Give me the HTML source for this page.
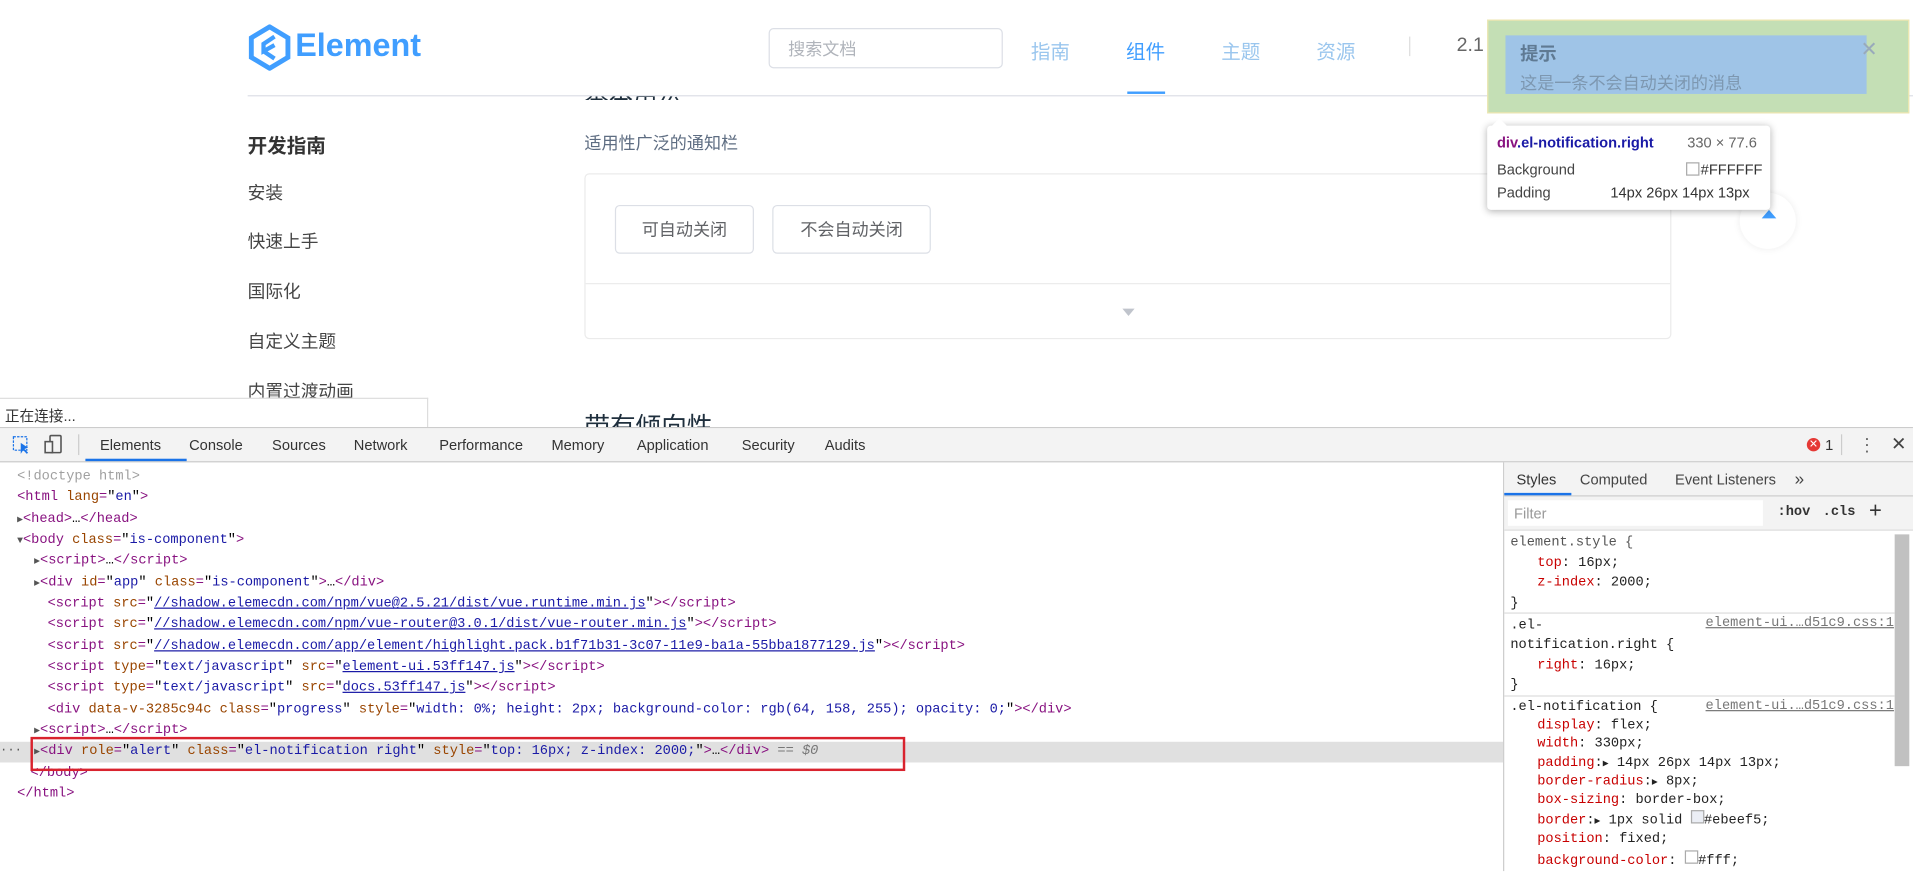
<!DOCTYPE html>
<html><head><meta charset="utf-8">
<style>
html,body{margin:0;padding:0;width:1913px;height:871px;overflow:hidden;background:#fff}
#w{position:absolute;left:0;top:0;width:1568px;height:714px;transform:scale(1.22);transform-origin:0 0;font-family:"Liberation Sans","Noto Sans CJK SC",sans-serif;}
.a{position:absolute;white-space:nowrap}
.m{font-family:"Liberation Mono","DejaVu Sans Mono",monospace;font-size:11.2px;}
.tg{color:#881280}.an{color:#994500}.av{color:#1a1aa6}.lk{color:#1a1aa6;text-decoration:underline}.gr{color:#a0a0a0}
.pn{color:#c80000}
.tab{position:absolute;top:358px;font-size:12px;color:#333}
</style></head><body><div id="w">
<!-- header -->
<svg class="a" style="left:203px;top:20px" width="36" height="38" viewBox="0 0 36 38"><path d="M18 2 L33 11 L33 27 L18 36 L3 27 L3 11 Z" fill="none" stroke="#409eff" stroke-width="4"/><path d="M22 10 L13 16 L13 22 L22 17 M13 22 L22 28" fill="none" stroke="#409eff" stroke-width="3.5"/></svg>
<div class="a" style="left:242px;top:22px;font-size:26.5px;font-weight:bold;color:#409eff">Element</div>
<div class="a" style="left:630px;top:23px;width:190px;height:31px;border:1px solid #dcdfe6;border-radius:4px"></div>
<div class="a" style="left:646px;top:30px;font-size:14px;color:#b0b4bb">搜索文档</div>
<div class="a" style="left:845px;top:29px;font-size:16px;color:#9ac6ee">指南</div>
<div class="a" style="left:923px;top:29px;font-size:16px;color:#409eff">组件</div>
<div class="a" style="left:924px;top:75px;width:31px;height:2px;background:#409eff"></div>
<div class="a" style="left:1001px;top:29px;font-size:16px;color:#9ac6ee">主题</div>
<div class="a" style="left:1079px;top:29px;font-size:16px;color:#9ac6ee">资源</div>
<div class="a" style="left:1155px;top:30px;width:1px;height:16px;background:#ddd"></div>
<div class="a" style="left:1194px;top:29px;font-size:16px;color:#666">2.1</div>
<div class="a" style="left:203px;top:78px;width:1365px;height:1px;background:#dcdfe6"></div>
<div class="a" style="left:479px;top:79px;width:100px;height:3px;overflow:hidden"><div style="margin-top:-18px;font-size:20px;color:#1f2f3d">基本用法</div></div>
<!-- sidebar -->
<div class="a" style="left:203px;top:106px;font-size:16px;font-weight:bold;color:#333">开发指南</div>
<div class="a" style="left:203px;top:147px;font-size:14.5px;color:#444">安装</div>
<div class="a" style="left:203px;top:187px;font-size:14.5px;color:#444">快速上手</div>
<div class="a" style="left:203px;top:228px;font-size:14.5px;color:#444">国际化</div>
<div class="a" style="left:203px;top:269px;font-size:14.5px;color:#444">自定义主题</div>
<div class="a" style="left:203px;top:310px;font-size:14.5px;color:#444">内置过渡动画</div>
<!-- content -->
<div class="a" style="left:479px;top:107px;font-size:14px;color:#5e6d82">适用性广泛的通知栏</div>
<div class="a" style="left:479px;top:142px;width:889px;height:134px;border:1px solid #ebebeb;border-radius:4px"></div>
<div class="a" style="left:480px;top:232px;width:889px;height:1px;background:#ebebeb"></div>
<div class="a" style="left:504px;top:168px;width:112px;height:38px;border:1px solid #dcdfe6;border-radius:4px;font-size:14px;color:#606266;text-align:center;line-height:38px">可自动关闭</div>
<div class="a" style="left:633px;top:168px;width:128px;height:38px;border:1px solid #dcdfe6;border-radius:4px;font-size:14px;color:#606266;text-align:center;line-height:38px">不会自动关闭</div>
<div class="a" style="left:920px;top:253px;width:0;height:0;border-left:5px solid transparent;border-right:5px solid transparent;border-top:6px solid #c0c4cc"></div>
<div class="a" style="left:479px;top:334px;width:200px;height:16px;overflow:hidden"><div style="font-size:21px;color:#1f2f3d">带有倾向性</div></div>
<!-- notification overlay -->
<div class="a" style="left:1219px;top:16px;width:346px;height:77px;background:#c4dfb5;border:1px solid #eee6b0;box-sizing:border-box"></div>
<div class="a" style="left:1234px;top:29px;width:296px;height:48px;background:#9fc4e7"></div>
<div class="a" style="left:1246px;top:33px;font-size:15px;font-weight:bold;color:#5f7a93">提示</div>
<div class="a" style="left:1246px;top:58px;font-size:14px;color:#7d97b0">这是一条不会自动关闭的消息</div>
<div class="a" style="left:1525px;top:31px;font-size:17px;color:#9ab">✕</div>
<!-- backtop -->
<div class="a" style="left:1426px;top:158px;width:46px;height:46px;border-radius:50%;background:#fff;box-shadow:0 0 6px rgba(0,0,0,.08)"></div>
<div class="a" style="left:1444px;top:172px;width:0;height:0;border-left:6px solid transparent;border-right:6px solid transparent;border-bottom:7px solid #409eff"></div>
<!-- tooltip -->
<div class="a" style="left:1219px;top:103px;width:232px;height:69px;background:#fff;border-radius:3px;box-shadow:0 1px 6px rgba(0,0,0,.3)"></div>
<div class="a" style="left:1222px;top:97px;width:0;height:0;border-left:7px solid transparent;border-right:7px solid transparent;border-bottom:7px solid #fff"></div>
<div class="a" style="left:1227px;top:110px;font-size:12px;font-weight:bold;color:#881280">div<span style="color:#1a1aa6">.el-notification.right</span></div>
<div class="a" style="left:1383px;top:110px;font-size:12px;color:#666">330 × 77.6</div>
<div class="a" style="left:1227px;top:132px;font-size:12px;color:#444">Background</div>
<div class="a" style="left:1382px;top:132px;font-size:12px;color:#333"><span style="display:inline-block;width:9px;height:9px;border:1px solid #aaa;vertical-align:-1px;margin-right:1px"></span>#FFFFFF</div>
<div class="a" style="left:1227px;top:151px;font-size:12px;color:#444">Padding</div>
<div class="a" style="left:1320px;top:151px;font-size:12px;color:#333">14px 26px 14px 13px</div>
<!-- status -->
<div class="a" style="left:0;top:326px;width:350px;height:24px;background:#fff;border-top:1px solid #ddd;border-right:1px solid #ddd"></div>
<div class="a" style="left:4px;top:332px;font-size:12px;color:#333">正在连接...</div>
<!-- devtools -->
<div class="a" style="left:0;top:350px;width:1568px;height:364px;background:#fff;border-top:1px solid #ccc"></div>
<div class="a" style="left:0;top:351px;width:1568px;height:27px;background:#f3f3f3;border-bottom:1px solid #ccc"></div>
<svg class="a" style="left:10px;top:357px" width="16" height="16"><rect x="1" y="1" width="11" height="11" fill="none" stroke="#1a73e8" stroke-dasharray="2 1"/><path d="M7 6 L7 15 L9 12 L12 15 L13 14 L10 11 L13 10Z" fill="#1a73e8"/></svg>
<svg class="a" style="left:36px;top:356px" width="16" height="16"><rect x="5" y="1" width="9" height="14" rx="1" fill="none" stroke="#555" stroke-width="1.3"/><rect x="1" y="6" width="6" height="9" fill="#f3f3f3" stroke="#555" stroke-width="1.3"/></svg>
<div class="a" style="left:64px;top:356px;width:1px;height:17px;background:#ccc"></div>
<div class="tab" style="left:82px;">Elements</div>
<div class="a" style="left:70px;top:376px;width:83px;height:2px;background:#1a73e8"></div>
<div class="tab" style="left:155px">Console</div>
<div class="tab" style="left:223px">Sources</div>
<div class="tab" style="left:290px">Network</div>
<div class="tab" style="left:360px">Performance</div>
<div class="tab" style="left:452px">Memory</div>
<div class="tab" style="left:522px">Application</div>
<div class="tab" style="left:608px">Security</div>
<div class="tab" style="left:676px">Audits</div>
<div class="a" style="left:1481px;top:359px;width:11px;height:11px;border-radius:50%;background:#e53935;color:#fff;font-size:9px;line-height:11px;text-align:center">✕</div>
<div class="tab" style="left:1496px">1</div>
<div class="a" style="left:1509px;top:356px;width:1px;height:17px;background:#ccc"></div>
<div class="a" style="left:1528px;top:357px;font-size:14px;color:#555;line-height:5px;width:3px">·<br>·<br>·</div>
<div class="a" style="left:1550px;top:355px;font-size:15px;color:#444">✕</div>
<!-- tree -->
<div class="a" style="left:0;top:608px;width:1232px;height:17px;background:#e0e0e0"></div>
<div class="a m" style="left:0;top:608px;color:#555;font-size:10px">...</div>
<div class="a m" style="left:0;top:383px;line-height:17.35px">
<div style="padding-left:14px" class="gr">&lt;!doctype html&gt;</div>
<div style="padding-left:14px"><span class="tg">&lt;html</span> <span class="an">lang</span><span class="tg">=</span>"<span class="av">en</span>"<span class="tg">&gt;</span></div>
<div style="padding-left:14px"><span style="font-size:8px;color:#555">▶</span><span class="tg">&lt;head&gt;</span>…<span class="tg">&lt;/head&gt;</span></div>
<div style="padding-left:14px"><span style="font-size:8px;color:#555">▼</span><span class="tg">&lt;body</span> <span class="an">class</span><span class="tg">=</span>"<span class="av">is-component</span>"<span class="tg">&gt;</span></div>
<div style="padding-left:28px"><span style="font-size:8px;color:#555">▶</span><span class="tg">&lt;script&gt;</span>…<span class="tg">&lt;/script&gt;</span></div>
<div style="padding-left:28px"><span style="font-size:8px;color:#555">▶</span><span class="tg">&lt;div</span> <span class="an">id</span><span class="tg">=</span>"<span class="av">app</span>" <span class="an">class</span><span class="tg">=</span>"<span class="av">is-component</span>"<span class="tg">&gt;</span>…<span class="tg">&lt;/div&gt;</span></div>
<div style="padding-left:39px"><span class="tg">&lt;script</span> <span class="an">src</span><span class="tg">=</span>"<span class="lk">//shadow.elemecdn.com/npm/vue@2.5.21/dist/vue.runtime.min.js</span>"<span class="tg">&gt;&lt;/script&gt;</span></div>
<div style="padding-left:39px"><span class="tg">&lt;script</span> <span class="an">src</span><span class="tg">=</span>"<span class="lk">//shadow.elemecdn.com/npm/vue-router@3.0.1/dist/vue-router.min.js</span>"<span class="tg">&gt;&lt;/script&gt;</span></div>
<div style="padding-left:39px"><span class="tg">&lt;script</span> <span class="an">src</span><span class="tg">=</span>"<span class="lk">//shadow.elemecdn.com/app/element/highlight.pack.b1f71b31-3c07-11e9-ba1a-55bba1877129.js</span>"<span class="tg">&gt;&lt;/script&gt;</span></div>
<div style="padding-left:39px"><span class="tg">&lt;script</span> <span class="an">type</span><span class="tg">=</span>"<span class="av">text/javascript</span>" <span class="an">src</span><span class="tg">=</span>"<span class="lk">element-ui.53ff147.js</span>"<span class="tg">&gt;&lt;/script&gt;</span></div>
<div style="padding-left:39px"><span class="tg">&lt;script</span> <span class="an">type</span><span class="tg">=</span>"<span class="av">text/javascript</span>" <span class="an">src</span><span class="tg">=</span>"<span class="lk">docs.53ff147.js</span>"<span class="tg">&gt;&lt;/script&gt;</span></div>
<div style="padding-left:39px"><span class="tg">&lt;div</span> <span class="an">data-v-3285c94c</span> <span class="an">class</span><span class="tg">=</span>"<span class="av">progress</span>" <span class="an">style</span><span class="tg">=</span>"<span class="av">width: 0%; height: 2px; background-color: rgb(64, 158, 255); opacity: 0;</span>"<span class="tg">&gt;&lt;/div&gt;</span></div>
<div style="padding-left:28px"><span style="font-size:8px;color:#555">▶</span><span class="tg">&lt;script&gt;</span>…<span class="tg">&lt;/script&gt;</span></div>
<div style="padding-left:28px"><span style="font-size:8px;color:#555">▶</span><span class="tg">&lt;div</span> <span class="an">role</span><span class="tg">=</span>"<span class="av">alert</span>" <span class="an">class</span><span class="tg">=</span>"<span class="av">el-notification right</span>" <span class="an">style</span><span class="tg">=</span>"<span class="av">top: 16px; z-index: 2000;</span>"<span class="tg">&gt;</span>…<span class="tg">&lt;/div&gt;</span> <span style="color:#777">== <i>$0</i></span></div>
<div style="padding-left:25px" class="tg">&lt;/body&gt;</div>
<div style="padding-left:14px" class="tg">&lt;/html&gt;</div>
</div>
<div class="a" style="left:25px;top:604px;width:713px;height:24px;border:2px solid #d9232e"></div>
<!-- styles pane -->
<div class="a" style="left:1232px;top:379px;width:1px;height:335px;background:#ccc"></div>
<div class="a" style="left:1233px;top:379px;width:335px;height:27px;background:#f3f3f3;border-bottom:1px solid #ccc"></div>
<div class="a" style="left:1243px;top:386px;font-size:12px;color:#333">Styles</div>
<div class="a" style="left:1233px;top:404px;width:55px;height:2px;background:#1a73e8"></div>
<div class="a" style="left:1295px;top:386px;font-size:12px;color:#444">Computed</div>
<div class="a" style="left:1373px;top:386px;font-size:12px;color:#444">Event Listeners</div>
<div class="a" style="left:1471px;top:384px;font-size:14px;color:#444">»</div>
<div class="a" style="left:1233px;top:407px;width:335px;height:27px;background:#f3f3f3;border-bottom:1px solid #ddd"></div>
<div class="a" style="left:1236px;top:410px;width:209px;height:21px;background:#fff"></div>
<div class="a" style="left:1241px;top:414px;font-size:12px;color:#999">Filter</div>
<div class="a m" style="left:1457px;top:414px;font-weight:bold;color:#333">:hov</div>
<div class="a m" style="left:1494px;top:414px;font-weight:bold;color:#333">.cls</div>
<div class="a" style="left:1532px;top:408px;font-size:18px;color:#333">+</div>
<div class="a" style="left:1553px;top:438px;width:12px;height:190px;background:#c1c1c1"></div>
<div class="a m" style="left:1238px;top:437px;line-height:16.5px;color:#222">
<div><span style="color:#555">element.style {</span></div>
<div style="padding-left:22px"><span class="pn">top</span>: 16px;</div>
<div style="padding-left:22px"><span class="pn">z-index</span>: 2000;</div>
<div>}</div>
</div>
<div class="a" style="left:1233px;top:502px;width:320px;height:1px;background:#ddd"></div>
<div class="a m" style="left:1238px;top:505px;line-height:16.3px;color:#222">
<div>.el-</div>
<div>notification.right {</div>
<div style="padding-left:22px"><span class="pn">right</span>: 16px;</div>
<div>}</div>
</div>
<div class="a m" style="left:1398px;top:505px;color:#777;text-decoration:underline">element-ui.…d51c9.css:1</div>
<div class="a" style="left:1233px;top:570px;width:320px;height:1px;background:#ddd"></div>
<div class="a m" style="left:1238px;top:573px;line-height:15.2px;color:#222">
<div>.el-notification {</div>
<div style="padding-left:22px"><span class="pn">display</span>: flex;</div>
<div style="padding-left:22px"><span class="pn">width</span>: 330px;</div>
<div style="padding-left:22px"><span class="pn">padding</span>:<span style="font-size:8px">▶</span> 14px 26px 14px 13px;</div>
<div style="padding-left:22px"><span class="pn">border-radius</span>:<span style="font-size:8px">▶</span> 8px;</div>
<div style="padding-left:22px"><span class="pn">box-sizing</span>: border-box;</div>
<div style="padding-left:22px"><span class="pn">border</span>:<span style="font-size:8px">▶</span> 1px solid <span style="display:inline-block;width:9px;height:9px;border:1px solid #aaa;background:#ebeef5"></span>#ebeef5;</div>
<div style="padding-left:22px"><span class="pn">position</span>: fixed;</div>
<div style="padding-left:22px"><span class="pn">background-color</span>: <span style="display:inline-block;width:9px;height:9px;border:1px solid #aaa"></span>#fff;</div>
</div>
<div class="a m" style="left:1398px;top:573px;color:#777;text-decoration:underline">element-ui.…d51c9.css:1</div>
</div></body></html>
